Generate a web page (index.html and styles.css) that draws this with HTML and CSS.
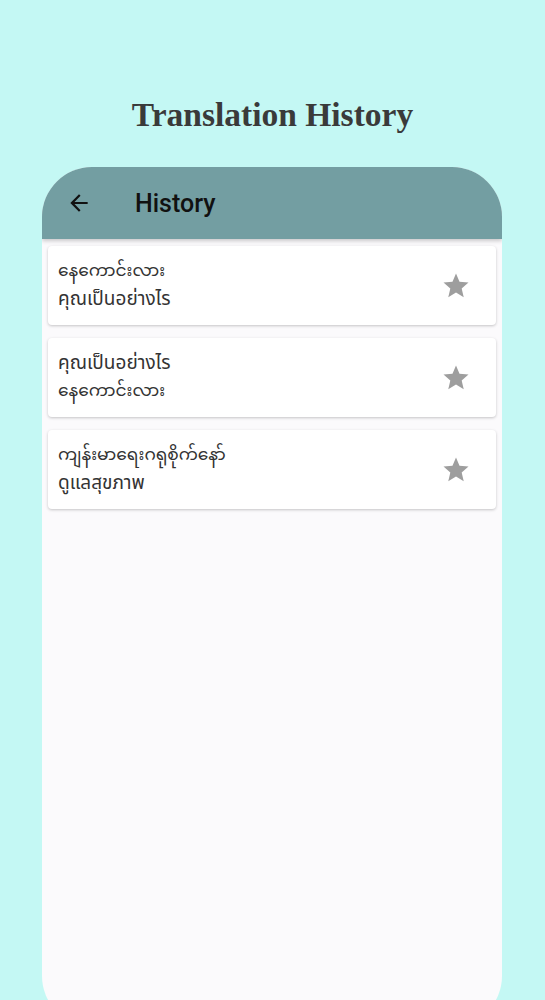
FILE: index.html
```html
<!DOCTYPE html>
<html>
<head>
<meta charset="utf-8">
<link rel="stylesheet" href="styles.css">
</head>
<body>
<h1 class="page-title">Translation History</h1>
<div class="phone">
  <div class="appbar">
    <svg class="back" viewBox="0 0 24 24" width="24" height="24"><path d="M20 11H7.83l5.59-5.59L12 4l-8 8 8 8 1.41-1.41L7.83 13H20v-2z" fill="#111"/></svg>
    <span class="appbar-title">History</span>
  </div>
  <div class="list">
    <div class="card">
      <div class="texts">
        <div class="line my">နေကောင်းလား</div>
        <div class="line th">คุณเป็นอย่างไร</div>
      </div>
      <svg class="star" viewBox="0 0 24 24" width="30" height="30"><path d="M12 17.27L18.18 21l-1.64-7.03L22 9.24l-7.19-.61L12 2 9.19 8.63 2 9.24l5.46 4.73L5.82 21z" fill="#9e9e9e"/></svg>
    </div>
    <div class="card">
      <div class="texts">
        <div class="line th">คุณเป็นอย่างไร</div>
        <div class="line my">နေကောင်းလား</div>
      </div>
      <svg class="star" viewBox="0 0 24 24" width="30" height="30"><path d="M12 17.27L18.18 21l-1.64-7.03L22 9.24l-7.19-.61L12 2 9.19 8.63 2 9.24l5.46 4.73L5.82 21z" fill="#9e9e9e"/></svg>
    </div>
    <div class="card">
      <div class="texts">
        <div class="line my">ကျန်းမာရေးဂရုစိုက်နော်</div>
        <div class="line th">ดูแลสุขภาพ</div>
      </div>
      <svg class="star" viewBox="0 0 24 24" width="30" height="30"><path d="M12 17.27L18.18 21l-1.64-7.03L22 9.24l-7.19-.61L12 2 9.19 8.63 2 9.24l5.46 4.73L5.82 21z" fill="#9e9e9e"/></svg>
    </div>
  </div>
</div>
</body>
</html>
```
FILE: styles.css
```css
html, body {
  margin: 0;
  padding: 0;
}
body {
  background: #c4f8f4;
  width: 545px;
  height: 1000px;
  overflow: hidden;
}
.page-title {
  margin: 0;
  padding-top: 95px;
  height: 72px;
  box-sizing: content-box;
  text-align: center;
  font-family: "Liberation Serif", serif;
  font-weight: bold;
  font-size: 33.5px;
  line-height: 40px;
  color: #3a3a3a;
}
.phone {
  margin: 0 0 0 42px;
  width: 460px;
  height: 859px;
  border-radius: 50px;
  background: #fbfafc;
  overflow: hidden;
}
.appbar {
  height: 72px;
  background: #739ea2;
  display: flex;
  align-items: center;
  padding-left: 24px;
  box-shadow: 0 2px 4px rgba(0,0,0,0.2);
  position: relative;
}
.back {
  width: 26px;
  height: 26px;
}
.appbar-title {
  margin-left: 43px;
  font-family: Roboto, sans-serif;
  font-weight: 500;
  font-size: 25px;
  color: #111;
}
.list {
  padding: 7px 6px;
  display: flex;
  flex-direction: column;
  gap: 13px;
}
.card {
  height: 79px;
  background: #fff;
  border-radius: 4px;
  box-shadow: 0 1px 3px rgba(0,0,0,0.22);
  display: flex;
  align-items: center;
  justify-content: space-between;
  padding: 0 25px 0 10px;
  box-sizing: border-box;
}
.texts {
  display: flex;
  flex-direction: column;
}
.line {
  height: 28px;
  line-height: 28px;
  color: #333;
  white-space: nowrap;
}
.my {
  font-family: "Noto Sans Myanmar", "Noto Sans", sans-serif;
  font-size: 17px;
}
.th {
  font-family: "Noto Sans Thai", "Noto Sans", sans-serif;
  font-size: 19px;
}
.star {
  display: block;
}
```
